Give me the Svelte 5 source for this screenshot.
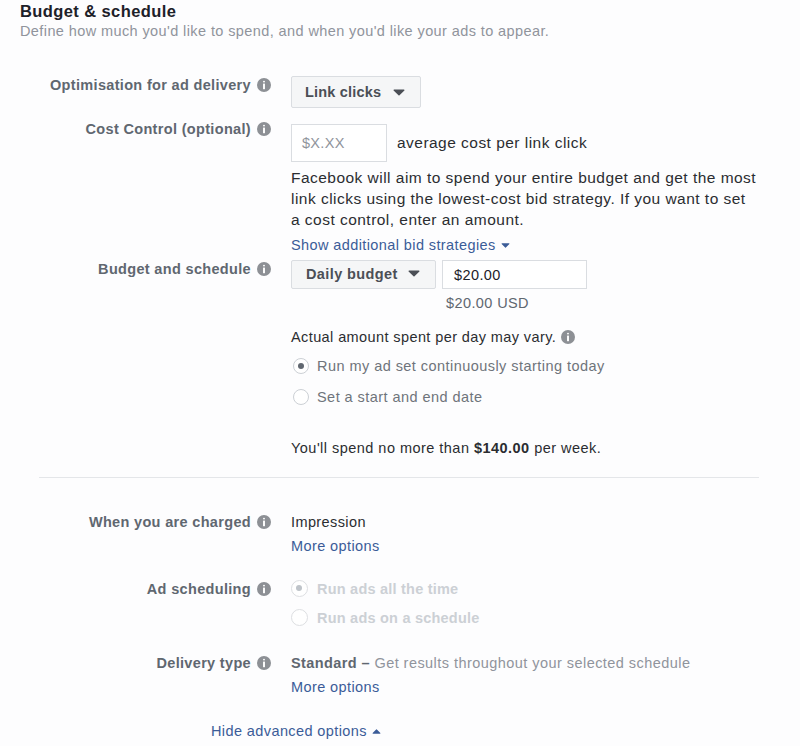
<script lang="ts">
	const scheduleOptions = [
		{ label: 'Run my ad set continuously starting today', checked: true },
		{ label: 'Set a start and end date', checked: false }
	];
	const adOptions = [
		{ label: 'Run ads all the time', checked: true },
		{ label: 'Run ads on a schedule', checked: false }
	];
</script>

{#snippet info()}
	<svg class="info" viewBox="0 0 16 16" aria-hidden="true">
		<circle cx="8" cy="8" r="8" fill="#8d9095" />
		<rect x="6.9" y="3" width="2.2" height="2.2" rx="1.1" fill="#fff" />
		<rect x="6.9" y="6.4" width="2.2" height="6.4" fill="#fff" />
	</svg>
{/snippet}

{#snippet caret()}
	<svg class="caret" viewBox="0 0 12 7" aria-hidden="true">
		<path d="M1 .5h10a.6.6 0 0 1 .4 1L6.5 6.3a.7.7 0 0 1-1 0L.6 1.5A.6.6 0 0 1 1 .5z" fill="currentColor" />
	</svg>
{/snippet}

<main class="page">
	<header class="head">
		<h2>Budget &amp; schedule</h2>
		<p>Define how much you'd like to spend, and when you'd like your ads to appear.</p>
	</header>

	<section class="row delivery">
		<div class="label">Optimisation for ad delivery {@render info()}</div>
		<div class="field">
			<button class="select link-clicks">Link clicks {@render caret()}</button>
		</div>
	</section>

	<section class="row cost">
		<div class="label">Cost Control (optional) {@render info()}</div>
		<div class="field">
			<div class="inline">
				<div class="input placeholder">$X.XX</div>
				<span class="large">average cost per link click</span>
			</div>
			<p class="copy large">
				Facebook will aim to spend your entire budget and get the most<br />link clicks using the lowest-cost bid strategy. If you want to set<br />a cost control, enter an amount.
			</p>
			<a class="link strategies" href="#top">Show additional bid strategies <span class="small-caret">{@render caret()}</span></a>
		</div>
	</section>

	<section class="row budget">
		<div class="label">Budget and schedule {@render info()}</div>
		<div class="field">
			<div class="inline tight">
				<button class="select daily">Daily budget {@render caret()}</button>
				<div class="input amount">$20.00</div>
			</div>
			<div class="usd">$20.00 USD</div>
			<div class="vary">Actual amount spent per day may vary. {@render info()}</div>
			<div class="radios">
				{#each scheduleOptions as option}
					<div class="radio-row">
						<span class="radio" class:checked={option.checked}></span>
						<span>{option.label}</span>
					</div>
				{/each}
			</div>
			<div class="weekly">You'll spend no more than <b>$140.00</b> per week.</div>
		</div>
	</section>

	<hr />

	<section class="row charged">
		<div class="label">When you are charged {@render info()}</div>
		<div class="field">
			<div class="plain">Impression</div>
			<a class="link more" href="#top">More options</a>
		</div>
	</section>

	<section class="row scheduling">
		<div class="label">Ad scheduling {@render info()}</div>
		<div class="field radios disabled">
			{#each adOptions as option}
				<div class="radio-row">
					<span class="radio" class:checked={option.checked}></span>
					<span>{option.label}</span>
				</div>
			{/each}
		</div>
	</section>

	<section class="row type">
		<div class="label">Delivery type {@render info()}</div>
		<div class="field">
			<div class="standard"><b>Standard –</b> Get results throughout your selected schedule</div>
			<a class="link more" href="#top">More options</a>
		</div>
	</section>

	<footer class="foot">
		<a class="link" href="#top">Hide advanced options <span class="small-caret up">{@render caret()}</span></a>
	</footer>
</main>

<style>
	:global(body) {
		background: #fdfdfe;
	}

	.page {
		width: 800px;
		height: 746px;
		overflow: hidden;
		box-sizing: border-box;
		font-family: 'Liberation Sans', Arial, sans-serif;
		font-size: 14.5px;
		letter-spacing: 0.4px;
		color: #2b2d31;
	}

	.head {
		padding: 1px 0 0 20px;
	}

	h2 {
		margin: 0;
		font-size: 16.5px;
		line-height: 21px;
		font-weight: 700;
		letter-spacing: 0.4px;
		color: #1d2129;
	}

	.head p {
		margin: -1px 0 0;
		line-height: 20px;
		color: #90949c;
	}

	.large {
		font-size: 15.5px;
		letter-spacing: 0.47px;
	}

	.row {
		display: grid;
		grid-template-columns: 271px 1fr;
		column-gap: 20px;
	}

	.label {
		display: flex;
		align-items: center;
		justify-content: flex-end;
		gap: 6px;
		height: 20px;
		font-weight: 700;
		letter-spacing: 0.33px;
		color: #606770;
		white-space: nowrap;
	}

	.info {
		width: 14px;
		height: 14px;
		flex: none;
	}

	.field {
		min-width: 0;
	}

	.delivery {
		margin-top: 34px;
	}

	.cost {
		margin-top: 16px;
	}

	.cost .label {
		margin-top: -5px;
	}

	.budget {
		margin-top: 5px;
	}

	.budget .label {
		margin-top: -1px;
	}

	.charged {
		margin-top: 34px;
	}

	.scheduling {
		margin-top: 23px;
	}

	.type {
		margin-top: 21px;
	}

	.select {
		display: flex;
		align-items: center;
		box-sizing: border-box;
		padding: 0;
		border: 1px solid #dadde1;
		border-radius: 2px;
		background: #f5f6f7;
		font: inherit;
		font-weight: 700;
		letter-spacing: inherit;
		color: #4b4f56;
		white-space: nowrap;
	}

	.link-clicks {
		width: 130px;
		height: 32px;
		margin-top: 1px;
		padding-left: 13px;
		gap: 12px;
		letter-spacing: 0.2px;
	}

	.daily {
		width: 145px;
		height: 29px;
		padding: 0 0 2px 14px;
		gap: 10px;
	}

	.caret {
		width: 12px;
		height: 7px;
	}

	.small-caret .caret {
		width: 9px;
		height: 5px;
		margin-left: 1px;
		vertical-align: 2px;
	}

	.up .caret {
		transform: rotate(180deg);
	}

	.inline {
		display: flex;
		align-items: center;
		gap: 10px;
		white-space: nowrap;
	}

	.inline.tight {
		gap: 6px;
	}

	.input {
		display: flex;
		align-items: center;
		box-sizing: border-box;
		border: 1px solid #dadde1;
		background: #fff;
	}

	.placeholder {
		width: 96px;
		height: 38px;
		padding-left: 10px;
		letter-spacing: 0.3px;
		color: #90949c;
	}

	.amount {
		width: 145px;
		height: 29px;
		padding-left: 11px;
		color: #1d2129;
	}

	.copy {
		margin: 5px 0 0;
		line-height: 21px;
		white-space: nowrap;
	}

	.link {
		color: #3b5c98;
		text-decoration: none;
		white-space: nowrap;
	}

	.strategies {
		display: block;
		margin-top: 5px;
		line-height: 20px;
	}

	.usd {
		margin: 4px 0 0 155px;
		line-height: 20px;
		color: #606770;
	}

	.vary {
		display: flex;
		align-items: center;
		gap: 5px;
		margin-top: 14px;
		height: 20px;
	}

	.radios {
		margin-top: 3px;
	}

	.radio-row {
		display: flex;
		align-items: center;
		gap: 8px;
		height: 31px;
		margin-left: 2px;
		letter-spacing: 0.45px;
		color: #6f747b;
	}

	.radio {
		position: relative;
		width: 16px;
		height: 16px;
		box-sizing: border-box;
		flex: none;
		border: 1px solid #ccd0d5;
		border-radius: 50%;
		background: #fff;
	}

	.radio.checked::after {
		content: '';
		position: absolute;
		top: 4px;
		left: 4px;
		width: 6px;
		height: 6px;
		border-radius: 50%;
		background: #606770;
	}

	.weekly {
		margin-top: 26px;
		line-height: 20px;
		letter-spacing: 0.47px;
	}

	hr {
		margin: 19px 0 0 39px;
		width: 720px;
		border: 0;
		border-top: 1px solid #e4e6e9;
	}

	.plain {
		line-height: 20px;
	}

	.more {
		display: block;
		margin-top: 4px;
		line-height: 20px;
	}

	.disabled {
		margin-top: -5px;
	}

	.disabled .radio-row {
		height: 29px;
		margin-left: 0;
		gap: 9px;
		font-weight: 700;
		letter-spacing: 0.22px;
		color: #ccd0d5;
	}

	.disabled .radio {
		width: 17px;
		height: 17px;
		border-color: #dddfe2;
	}

	.disabled .radio.checked::after {
		background: #bec3c9;
	}

	.standard {
		line-height: 20px;
		letter-spacing: 0.45px;
		color: #90949c;
		white-space: nowrap;
	}

	.standard b {
		color: #606770;
		letter-spacing: 0.4px;
	}

	.foot {
		margin: 24px 0 0 211px;
		line-height: 20px;
	}
</style>
